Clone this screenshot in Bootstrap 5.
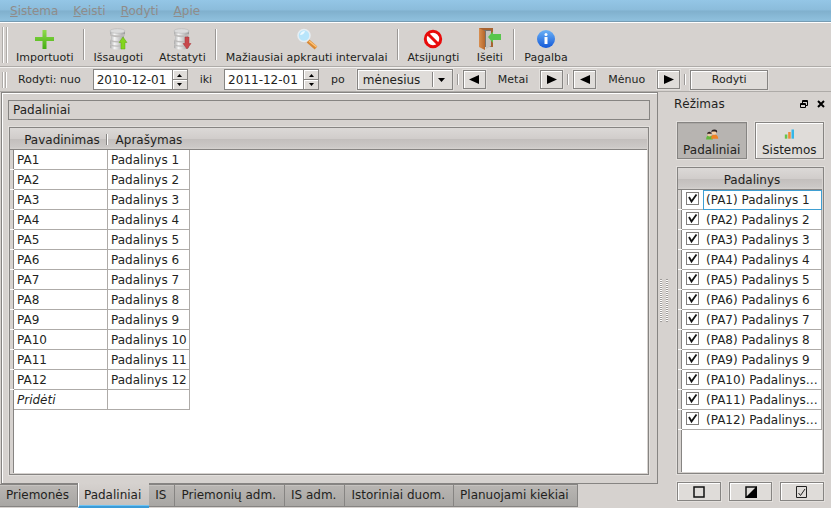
<!DOCTYPE html>
<html lang="lt">
<head>
<meta charset="utf-8">
<meta name="viewport" content="width=device-width, initial-scale=1">
<title>Padaliniai</title>
<link href="https://cdn.jsdelivr.net/npm/bootstrap@5.3.0/dist/css/bootstrap.min.css" rel="stylesheet">
<style>
:root{--face:#d6d2cf;--edge:#868482;--line:#aeaba8;--ink:#231f1d}
body{background:var(--face);color:var(--ink);font:12px/16px "DejaVu Sans",sans-serif}
button,input,select{font:inherit;color:inherit;border-radius:0}
.menubar{height:23px;background:linear-gradient(#94c6e6,#8bbcdb 45%,#80b0cd 50%,#8ebfdc 90%);border-bottom:1px solid #fff;box-shadow:inset 0 -1px #779cb3;padding:0 10px;gap:15px}
.menubar a{color:#8f8c8a}
.toolrow{border-bottom:1px solid var(--line);font-size:11px;line-height:14px;padding-left:2px}
.tools-main{height:44px}
.tools-range{height:25px;border-top:1px solid #f4f2f0}
.grip{width:5px;height:36px;border:solid var(--line);border-width:0 1px;box-shadow:inset 1px 0 #fff,1px 0 #fff;margin-right:1px}
.tools-range .grip{width:4px;height:16px;margin-right:0}
.tool{background:none;border:0;padding:3px 8px 0;min-width:45px}
.tool svg{width:24px;height:24px}
.rule{width:2px;height:31px;border-left:1px solid #9b9896;border-right:1px solid #fff;margin:0 1px}
.tools-range .rule{height:11px;margin:0 4px}
.cap{margin:0 12px}
.raised{background:#dfdcd9;border:1px solid var(--edge);box-shadow:inset 1px 1px #fff,0 0 0 1px #e2dfdc;padding:0}
.step{width:23px;height:19px}
.show{width:78px;height:20px}
.spin{width:95px;height:21px;border:1px solid var(--edge);background:#fff;font-size:12px}
.spin input{border:0;outline:0;padding:0 0 0 3px;min-width:0;background:none}
.spin-keys{width:15px;border-left:1px solid var(--edge)}
.spin-keys button{border:0;background:#dfdcd9;padding:0;line-height:0;box-shadow:inset 1px 1px #fff}
.spin-keys button+button{border-top:1px solid var(--edge)}
.period{appearance:none;width:96px;height:21px;font-size:12px;line-height:16px;padding:0 20px 0 5px;background:url("data:image/svg+xml,%3Csvg xmlns='http://www.w3.org/2000/svg' width='20' height='17'%3E%3Cpath d='M1.5 1v15' stroke='%23868482'/%3E%3Cpath d='M2.5 1v15' stroke='%23fff'/%3E%3Cpath d='M7 7h7l-3.500 4z'/%3E%3C/svg%3E") right 1px center no-repeat #dfdcd9}
.pane{border:1px solid var(--edge);box-shadow:inset 1px 1px #fff;padding:7px 7px 8px 6px;margin-left:1px}
.heading{font-size:12px;font-weight:400;line-height:16px;border:1px solid var(--edge);padding:1px 4px;margin:0 0 7px}
.frame{border:1px solid var(--edge);box-shadow:0 0 0 1px #e2dfdc,inset -1px -1px #d6d2cf;margin-left:1px;margin-right:1px;padding-left:4px;background:
 linear-gradient(#dcd9d7,#d1cdcb 48%,#c3bfbd 52%,#cbc8c6 85%,#d3d0cd 94%,var(--edge) 96%) 0 0/100% 22px no-repeat,
 repeating-linear-gradient(transparent 0 19px,#fff 19px 20px) 0 22px/4px 240px no-repeat,
 linear-gradient(to right,var(--face) 0 3px,var(--edge) 3px 4px,#fff 4px)}
.grid-view{border-collapse:separate;border-spacing:0}
.grid-view th{height:22px;padding:2px 0 0;font-weight:400;text-align:center}
.grid-view td{height:20px;line-height:16px;padding:0 3px;border:solid var(--line);border-width:0 1px 1px 0;white-space:nowrap}
.grid-view th.split{background:linear-gradient(to right,var(--edge) 50%,#fff 50%) right 0 center/2px 11px no-repeat;padding-left:2px}
.units{width:176px;margin-bottom:60px;table-layout:fixed}
.units .first{width:94px}
.tabs{padding-left:0;height:25px;margin-top:-1px}
.tabs button{border:1px solid var(--edge);border-left-width:0;background:linear-gradient(#b9b6b3,#a8a6a3);height:23px;margin-top:1px;padding:0 8px 2px 6px;box-shadow:inset 0 1px #c6c3c0;white-space:nowrap}
.tabs button.active{background:linear-gradient(#d6d2cf,#c6c1be);border:0;border-bottom:2px solid #3d9bd6;border-left:1px solid #fff;height:25px;margin:0;padding:0 8px 0 5px;box-shadow:inset 0 -1px #6cc3f5}
.splitter{width:19px;padding-left:2px}
.dots{width:9px;height:43px;background:
 repeating-linear-gradient(#9e9b99 0 1px,#fff 1px 2px) 0 0/2px 100% no-repeat,
 repeating-linear-gradient(#9e9b99 0 1px,#fff 1px 2px) 6px 0/2px 100% no-repeat}
.dock{width:147px;margin-right:7px;padding:4px 0 7px}
.dock-title{font-size:12px;line-height:16px;margin-left:-3px;margin-right:-2px}
.dock-title button{background:none;border:0;padding:0}
.modes{margin:10px 0 8px}
.mode{height:37px;padding:4px 0 0;width:70px}
.mode svg{width:16px;height:17px}
.mode.active{background:#b7b4b1;box-shadow:0 0 0 1px #e2dfdc,inset 0 1px #aaa7a4}
.picks{width:100%;table-layout:fixed}
.picks td{border-right:0}
.picks td.tick{width:21px;padding:0 0 0 4px}
.picks td.item{border-right:1px solid var(--line);padding:0 0 0 3px}
.picks td.current{border:1px solid #3f9fd2;padding:0 0 0 2px;line-height:15px}
.tick input{appearance:none;display:block;margin:-2px 0 0;width:13px;height:13px;border:1px solid #807d7b;background:#fff}
.tick input:checked{background:#fff url("data:image/svg+xml,%3Csvg xmlns='http://www.w3.org/2000/svg' viewBox='0 0 11 11'%3E%3Cpath d='M2 4 4.500 8.500 9.500 1.500' fill='none' stroke='%23151515' stroke-width='1.800'/%3E%3C/svg%3E")}
.dock .frame{padding-right:1px}
.small-act{height:19px}
.defs{width:0;height:0}
</style>
<script src="https://cdn.jsdelivr.net/npm/bootstrap@5.3.0/dist/js/bootstrap.bundle.min.js" defer></script>
</head>
<body>
<svg class="defs position-absolute" aria-hidden="true"><defs>
  <linearGradient id="gGreen" x2="0" y2="1"><stop stop-color="#8fdc4a"/><stop offset="1" stop-color="#43ad12"/></linearGradient>
  <linearGradient id="gMetal"><stop stop-color="#aaa"/><stop offset=".3" stop-color="#f5f5f5"/><stop offset=".6" stop-color="#ccc"/><stop offset="1" stop-color="#999"/></linearGradient>
  <linearGradient id="gBlue" x2="0" y2="1"><stop stop-color="#6cb2f6"/><stop offset="1" stop-color="#1258d8"/></linearGradient>
  <linearGradient id="gDoor"><stop stop-color="#d98f50"/><stop offset="1" stop-color="#b5662b"/></linearGradient>
  <symbol id="disks" viewBox="0 0 24 24"><path d="M4 4v3q7 3 15 0V4zM5 9v4q6 3 13 0V9zM4 14v3q7 3 15 0v-3zM4 18v3q7 3 15 0v-3z" fill="url(#gMetal)"/><path d="M4 7q7 3 15 0v1.500Q11 12 4 8.500zM4 12.500q7 3 15 0V14Q11 17 4 14zM4 17q7 3 15 0v1.200q-8 3-15 0z" fill="#bdbbba"/><ellipse cx="11.500" cy="4" rx="7.500" ry="2.300" fill="#dcdcdc" stroke="#b5b5b5" stroke-width=".6"/></symbol>
</defs></svg>
<div class="d-flex flex-column min-vh-100">
<nav class="menubar d-flex align-items-center">
  <a class="text-decoration-none" href="#"><u>S</u>istema</a><a class="text-decoration-none" href="#"><u>K</u>eisti</a><a class="text-decoration-none" href="#"><u>R</u>odyti</a><a class="text-decoration-none" href="#"><u>A</u>pie</a>
</nav>

<div class="toolrow tools-main d-flex align-items-center">
  <span class="grip"></span>
  <button class="tool d-flex flex-column align-items-center" type="button"><svg viewBox="0 0 24 24"><path d="M9.500 3h4v7H21v4h-7.500v8h-4v-8H2v-4h7.500z" fill="url(#gGreen)"/></svg>Importuoti</button>
  <span class="rule"></span>
  <button class="tool d-flex flex-column align-items-center" type="button"><svg viewBox="0 0 24 24"><use href="#disks"/><path d="M13 15.500 17 10l4 5.500h-2V22h-4v-6.500z" fill="#83d51e" stroke="#5da512" stroke-width=".5"/></svg>Išsaugoti</button>
  <button class="tool d-flex flex-column align-items-center" type="button"><svg viewBox="0 0 24 24"><use href="#disks"/><path d="M13 16.500 17 22l4-5.500h-2V10h-4v6.500z" fill="#c8474b" stroke="#a9353a" stroke-width=".5"/></svg>Atstatyti</button>
  <span class="rule"></span>
  <button class="tool d-flex flex-column align-items-center" type="button"><svg viewBox="0 0 24 24"><path d="m13 14 8 7" stroke="#d98935" stroke-width="4"/><path d="m14 14 7.500 6" stroke="#ffc477" stroke-width="1.500"/><circle cx="9" cy="8.500" r="6" fill="#b8e5fb" stroke="#e6eef3" stroke-width="1.500"/><path d="M5 8q1-4 5-4-1 4-5 4" fill="#effaff"/></svg>Mažiausiai apkrauti intervalai</button>
  <span class="rule"></span>
  <button class="tool d-flex flex-column align-items-center" type="button"><svg viewBox="0 0 24 24"><circle cx="12" cy="12" r="7.700" fill="#fff" stroke="#e80b0b" stroke-width="3"/><path d="m6.500 6.500 11 11" stroke="#e80b0b" stroke-width="3"/></svg>Atsijungti</button>
  <button class="tool d-flex flex-column align-items-center" type="button"><svg viewBox="0 0 24 24"><path d="M1 1h14v19H1z" fill="#a86330"/><path d="M5 3h8v17H5z" fill="#77736f"/><path d="M1 1l6 3v19l-6-3z" fill="url(#gDoor)"/><path d="M8 4h5v15l-5 3z" fill="#c4c3c1"/><path d="M10 10l5-5.500V7h8v6h-8v3z" fill="#58c64c"/></svg>Išeiti</button>
  <span class="rule"></span>
  <button class="tool d-flex flex-column align-items-center" type="button"><svg viewBox="0 0 24 24"><circle cx="12" cy="12" r="9" fill="url(#gBlue)"/><circle cx="12" cy="7.500" r="1.500" fill="#fff"/><path d="M10.500 10h3v7h-3z" fill="#fff"/></svg>Pagalba</button>
</div>

<div class="toolrow tools-range d-flex align-items-center">
  <span class="grip"></span>
  <label class="cap" for="from">Rodyti: nuo</label>
  <div class="spin d-flex"><input class="flex-fill w-100" id="from" type="text" value="2010-12-01"><span class="spin-keys d-flex flex-column flex-shrink-0"><button class="flex-fill" type="button" aria-label="Didinti"><svg width="7" height="4"><path d="M1 4h5L3.500 1z"/></svg></button><button class="flex-fill" type="button" aria-label="Mažinti"><svg width="7" height="4"><path d="M1 0h5L3.500 3z"/></svg></button></span></div>
  <label class="cap" for="until">iki</label>
  <div class="spin d-flex"><input class="flex-fill w-100" id="until" type="text" value="2011-12-01"><span class="spin-keys d-flex flex-column flex-shrink-0"><button class="flex-fill" type="button" aria-label="Didinti"><svg width="7" height="4"><path d="M1 4h5L3.500 1z"/></svg></button><button class="flex-fill" type="button" aria-label="Mažinti"><svg width="7" height="4"><path d="M1 0h5L3.500 3z"/></svg></button></span></div>
  <label class="cap" for="period">po</label>
  <select class="raised period" id="period"><option>mėnesius</option></select>
  <span class="rule"></span>
  <button class="raised step d-flex align-items-center justify-content-center" type="button" aria-label="Ankstesni metai"><svg width="10" height="9"><path d="M10 0v9L0 4.500z"/></svg></button>
  <span class="cap">Metai</span>
  <button class="raised step d-flex align-items-center justify-content-center" type="button" aria-label="Kiti metai"><svg width="10" height="9"><path d="M0 0v9l10-4.500z"/></svg></button>
  <span class="rule"></span>
  <button class="raised step d-flex align-items-center justify-content-center" type="button" aria-label="Ankstesnis mėnuo"><svg width="10" height="9"><path d="M10 0v9L0 4.500z"/></svg></button>
  <span class="cap">Mėnuo</span>
  <button class="raised step d-flex align-items-center justify-content-center" type="button" aria-label="Kitas mėnuo"><svg width="10" height="9"><path d="M0 0v9l10-4.500z"/></svg></button>
  <span class="rule"></span>
  <button class="raised show" type="button">Rodyti</button>
</div>

<div class="d-flex flex-fill">
  <main class="d-flex flex-column flex-fill">
    <section class="pane d-flex flex-column flex-fill">
      <h1 class="heading">Padaliniai</h1>
      <div class="frame flex-fill">
        <table class="grid-view units">
          <thead><tr><th class="first split">Pavadinimas</th><th>Aprašymas</th></tr></thead>
          <tbody id="units"></tbody>
        </table>
      </div>
    </section>
    <div class="tabs d-flex align-items-start" role="tablist">
      <button type="button" role="tab">Priemonės</button><button type="button" role="tab" class="active" aria-selected="true">Padaliniai</button><button type="button" role="tab">IS</button><button type="button" role="tab">Priemonių adm.</button><button type="button" role="tab">IS adm.</button><button type="button" role="tab">Istoriniai duom.</button><button type="button" role="tab">Planuojami kiekiai</button>
    </div>
  </main>
  <div class="splitter d-flex align-items-center"><span class="dots"></span></div>
  <aside class="dock d-flex flex-column flex-shrink-0">
    <div class="dock-title d-flex align-items-center justify-content-between">
      <span>Rėžimas</span>
      <span class="d-flex gap-2">
        <button class="d-flex" type="button" aria-label="Atskirti"><svg width="9" height="9" fill="none" stroke="#000"><path d="M2.500 3V.5h5v5H6M2 1.500h6M.5 3.500h5v4h-5zM0 4.500h6"/></svg></button>
        <button class="d-flex" type="button" aria-label="Uždaryti"><svg width="9" height="9"><path d="m1 1 6 6M7 1 1 7" stroke="#000" stroke-width="2"/></svg></button>
      </span>
    </div>
    <div class="modes d-flex gap-2">
      <button class="raised mode active d-flex flex-column align-items-center flex-fill" type="button"><svg viewBox="0 0 16 18"><path d="M1 15q0-5 4-5t4 5z" fill="#62b83a"/><circle cx="5" cy="9" r="2.500" fill="#e9c9a4"/><path d="M2 9q0-4 4-3l2 2-5 0z" fill="#322"/><path d="M7 14q0-5 4-5t4.500 5z" fill="#f08224"/><circle cx="10.500" cy="6.500" r="2.800" fill="#f5cfa8"/><path d="M7.500 7q-1-4 3.500-4 4 0 3 4l-2-1.500-3.500 0z" fill="#2b2020"/></svg>Padaliniai</button>
      <button class="raised mode d-flex flex-column align-items-center flex-fill" type="button"><svg viewBox="0 0 16 18"><path d="M3 9h3v5H3z" fill="#67c44c"/><path d="M7 6h3v8H7z" fill="#f08a37"/><path d="M11 3h3v11h-3z" fill="#35b7e8"/></svg>Sistemos</button>
    </div>
    <div class="frame flex-fill mx-0">
      <table class="grid-view picks">
        <colgroup><col width="21"><col></colgroup>
        <thead><tr><th colspan="2">Padalinys</th></tr></thead>
        <tbody id="picks"></tbody>
      </table>
    </div>
    <div class="d-flex gap-2 mt-2">
      <button class="raised small-act d-flex align-items-center justify-content-center flex-fill" type="button" aria-label="Nežymėti"><svg width="12" height="12"><path d="M1 1h10v10H1z" fill="none" stroke="#111" stroke-width="1.500"/></svg></button>
      <button class="raised small-act d-flex align-items-center justify-content-center flex-fill" type="button" aria-label="Apversti žymėjimą"><svg width="12" height="12"><path d="M1 1h10v10H1z" fill="none" stroke="#111" stroke-width="1.500"/><path d="M12 0v12H0z"/></svg></button>
      <button class="raised small-act d-flex align-items-center justify-content-center flex-fill" type="button" aria-label="Žymėti visus"><svg width="12" height="12" fill="none" stroke="#222"><path d="M.5.5h10v11H.5z"/><path d="M2.500 7 4.500 9.500 9 3"/></svg></button>
    </div>
  </aside>
</div>
</div>
<script>
let rows = '', picks = '';
for (let n = 1; n <= 12; n++) {
  const unit = n < 10 ? `Padalinys ${n}` : 'Padalinys…';
  rows += `<tr><td>PA${n}</td><td>Padalinys ${n}</td></tr>`;
  picks += `<tr><td class="tick"><input type="checkbox" id="pa${n}" checked></td><td class="item${n === 1 ? ' current' : ''}"><label class="d-inline" for="pa${n}">(PA${n}) ${unit}</label></td></tr>`;
}
document.getElementById('units').innerHTML = rows + '<tr><td><em>Pridėti</em></td><td></td></tr>';
document.getElementById('picks').innerHTML = picks;
</script>
</body>
</html>
